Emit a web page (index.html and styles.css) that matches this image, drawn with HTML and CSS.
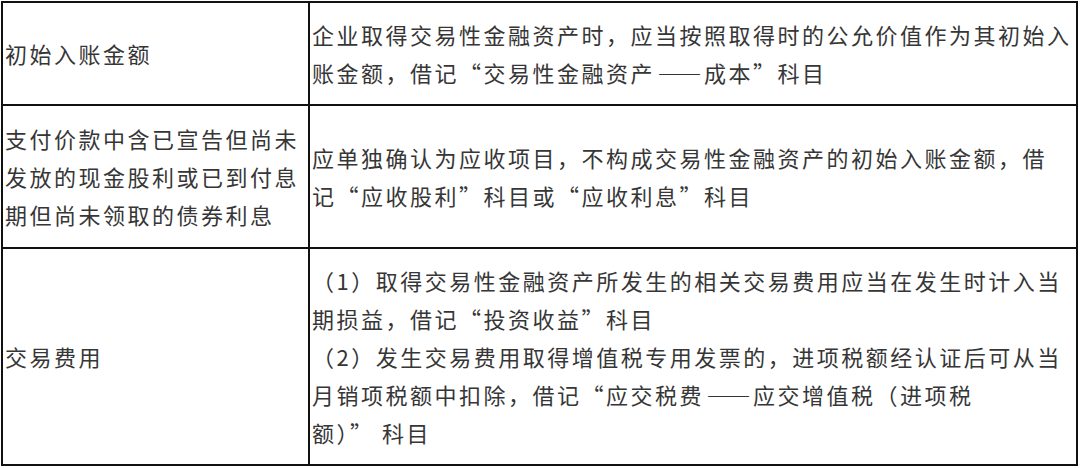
FILE: index.html
```html
<!DOCTYPE html>
<html lang="zh-CN">
<head>
<meta charset="utf-8">
<link rel="stylesheet" href="styles.css">
</head>
<body>
<div class="page">
<table class="sheet">
  <colgroup>
    <col class="col-key">
    <col class="col-val">
  </colgroup>
  <tbody>
    <tr class="row-1">
      <td class="key">初始入账金额</td>
      <td class="val"><span class="ln">企业取得交易性金融资产时，应当按照取得时的公允价值作为其初始入</span><br><span class="ln">账金额，借记“交易性金融资产<span class="dash">——</span>成本”科目</span></td>
    </tr>
    <tr class="row-2">
      <td class="key"><span class="ln">支付价款中含已宣告但尚未</span><br><span class="ln">发放的现金股利或已到付息</span><br><span class="ln">期但尚未领取的债券利息</span></td>
      <td class="val"><span class="ln">应单独确认为应收项目，不构成交易性金融资产的初始入账金额，借</span><br><span class="ln">记“应收股利”科目或“应收利息”科目</span></td>
    </tr>
    <tr class="row-3">
      <td class="key">交易费用</td>
      <td class="val"><span class="ln">（1）取得交易性金融资产所发生的相关交易费用应当在发生时计入当</span><br><span class="ln">期损益，借记“投资收益”科目</span><br><span class="ln">（2）发生交易费用取得增值税专用发票的，进项税额经认证后可从当</span><br><span class="ln">月销项税额中扣除，借记“应交税费<span class="dash">——</span>应交增值税（进项税</span><br><span class="ln">额）” 科目</span></td>
    </tr>
  </tbody>
</table>
</div>
</body>
</html>
```

FILE: styles.css
```css
html, body {
  margin: 0;
  padding: 0;
  background: #ffffff;
}

.page {
  padding: 1px 0 0 1px;
}

.sheet {
  border-collapse: collapse;
  width: 1077px;
  table-layout: fixed;
  font-family: "Noto Sans CJK SC", "Noto Sans", sans-serif;
  font-size: 22px;
  letter-spacing: 2.5px;
  line-height: 38px;
  color: #363636;
  border: 2px solid #111111;
}

.col-key {
  width: 307px;
}

.sheet td {
  border: 2px solid #111111;
  padding: 12px 0 13px 2px;
  vertical-align: middle;
  white-space: nowrap;
}

.row-2 td {
  padding-top: 13px;
  padding-bottom: 14px;
}

.ln {
  white-space: nowrap;
}

.dash {
  letter-spacing: 0;
  margin: 0 2.5px;
}
```
